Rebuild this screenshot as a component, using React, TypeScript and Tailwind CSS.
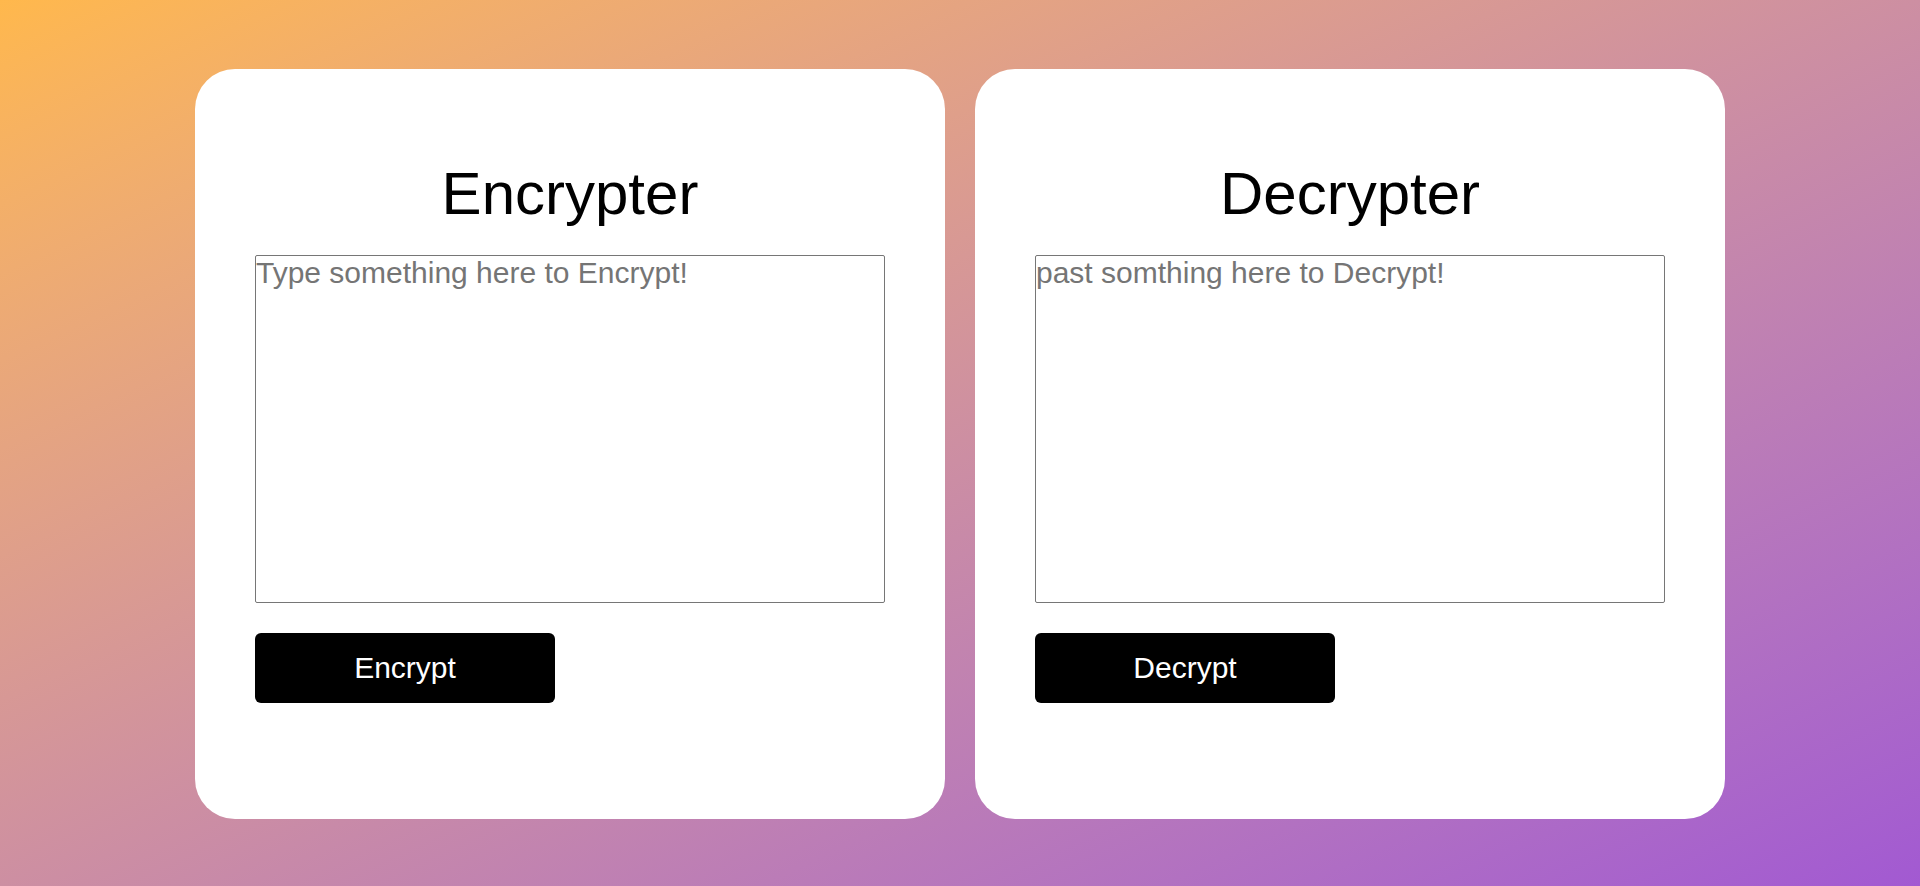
import React from "react";

function Panel({ title, placeholder, action }: { title: string; placeholder: string; action: string }) {
  return (
    <section className="flex h-[750px] w-[750px] flex-col rounded-[40px] bg-white px-[60px] pt-[60px]">
      <h1 className="mt-[30px] mb-[27px] text-center text-[60px] leading-[69px] font-normal text-black">{title}</h1>
      <textarea
        className="h-[348px] w-full resize-none rounded-[2px] border border-[#767676] bg-white p-0 text-[30px] leading-[normal] text-black outline-none placeholder:text-[#757575]"
        placeholder={placeholder}
      />
      <button className="mt-[30px] h-[70px] w-[300px] rounded-md bg-black text-[30px] leading-[normal] text-white">
        {action}
      </button>
    </section>
  );
}

export default function App() {
  return (
    <main
      className="flex h-[886px] w-full items-center justify-center gap-[30px] bg-gradient-to-br from-[#ffb84c] to-[#a259d2] pt-[2px]"
      style={{ fontFamily: '"Liberation Sans", Arial, sans-serif' }}
    >
      <Panel title="Encrypter" placeholder="Type something here to Encrypt!" action="Encrypt" />
      <Panel title="Decrypter" placeholder="past somthing here to Decrypt!" action="Decrypt" />
    </main>
  );
}
